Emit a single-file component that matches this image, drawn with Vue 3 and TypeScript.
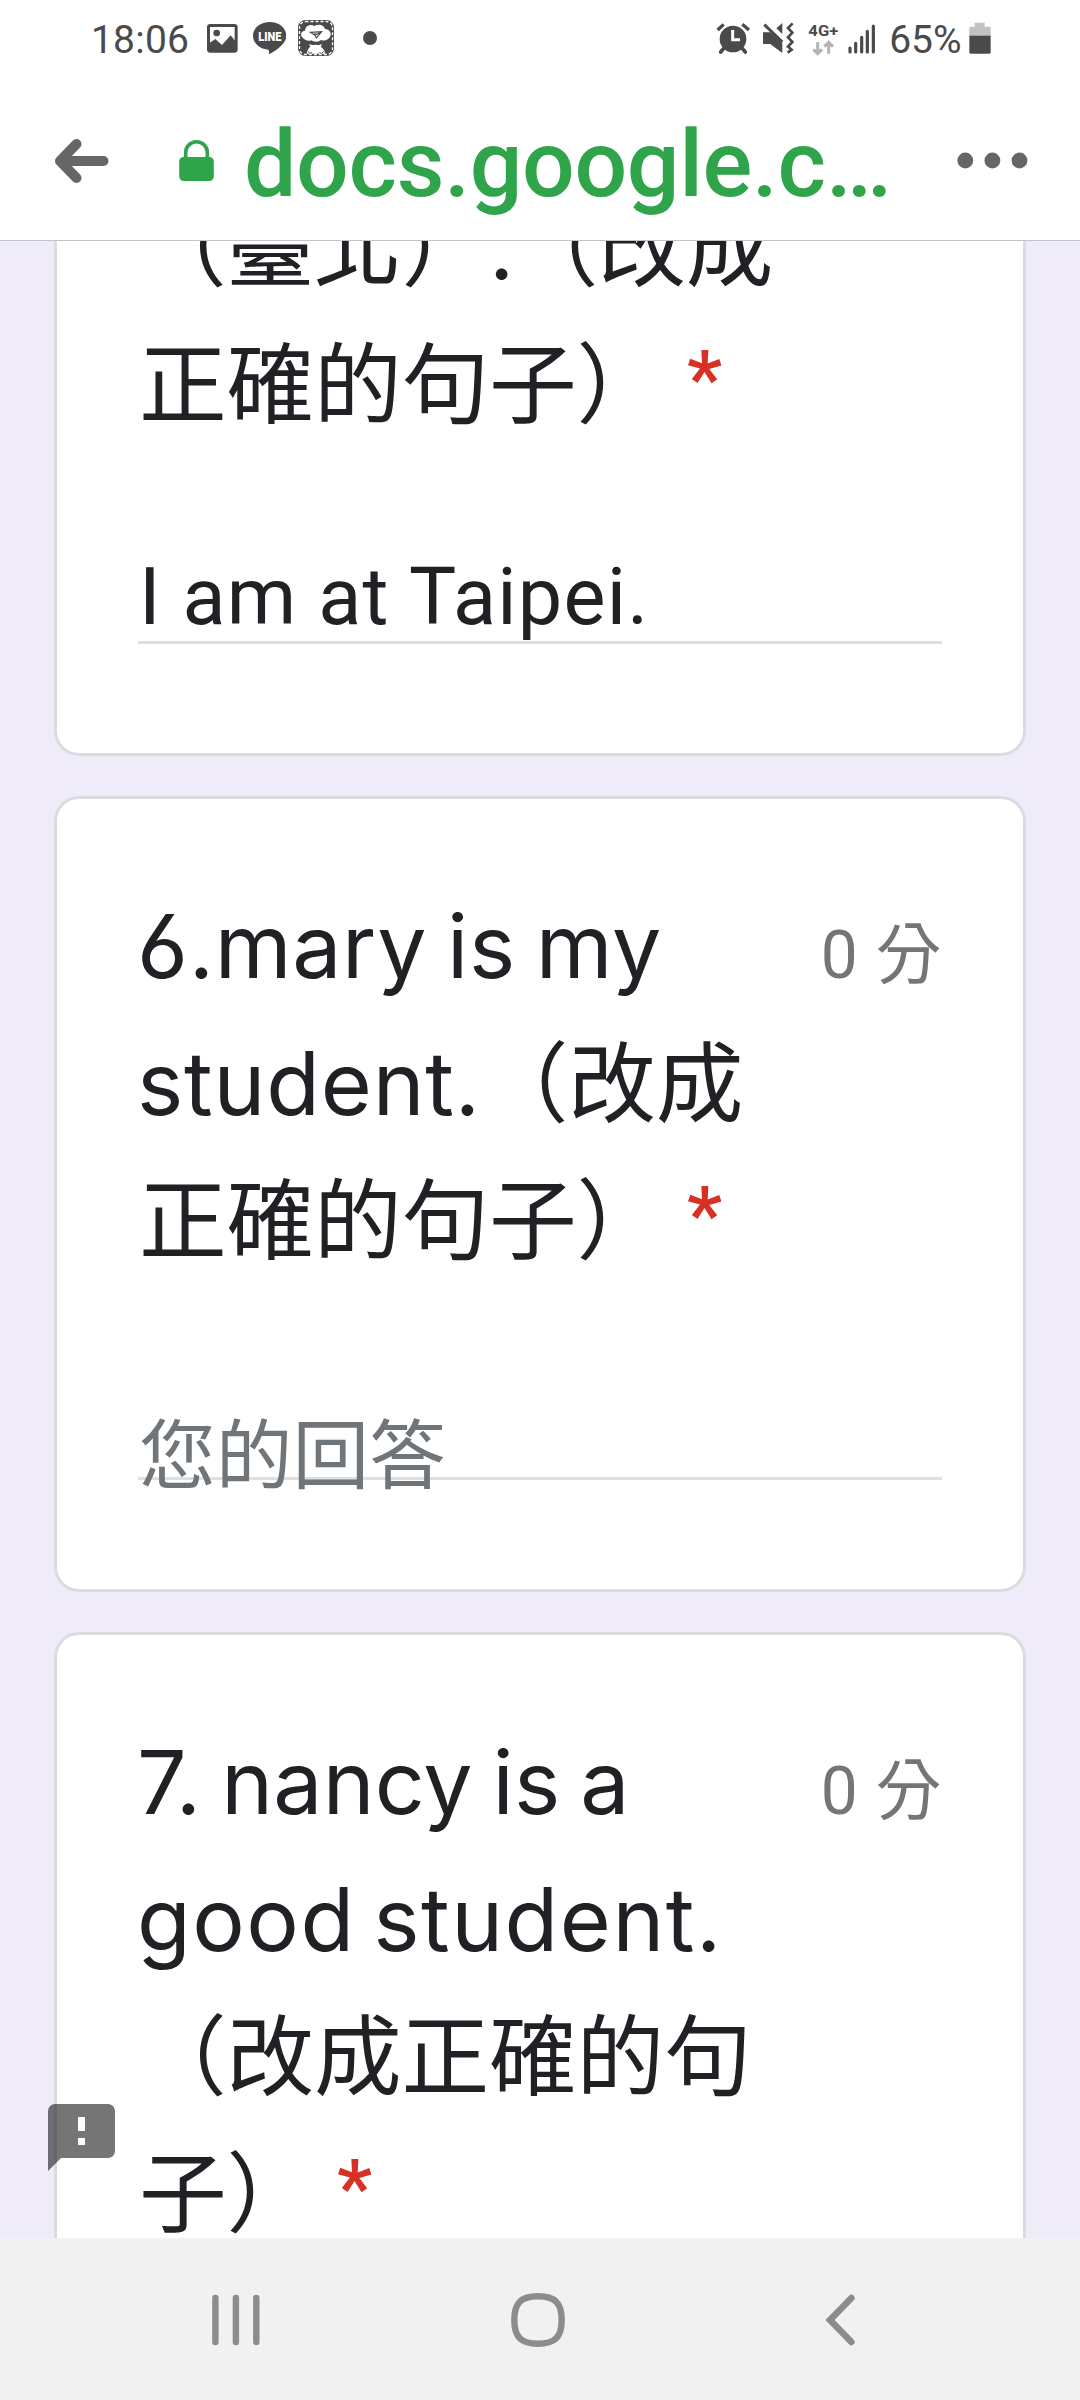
<script setup lang="ts">
interface Run {
  text: string
  kind: 'latin' | 'cjk'
  spacing?: number
  wordSpacing?: number
}
interface Question {
  id: number
  lines: Run[][]
  points?: string
  answer?: string
}

const placeholder = '您的回答'

const questions: Question[] = [
  {
    id: 5,
    lines: [
      [
        { text: '（臺北）', kind: 'cjk' },
        { text: '.', kind: 'latin', spacing: -3.5 },
        { text: '（改成', kind: 'cjk' },
      ],
      [{ text: '正確的句子）', kind: 'cjk' }],
    ],
    answer: 'I am at Taipei.',
  },
  {
    id: 6,
    lines: [
      [{ text: '6.mary is my', kind: 'latin', spacing: 0.7, wordSpacing: -5.5 }],
      [
        { text: 'student.', kind: 'latin', spacing: 0.8 },
        { text: '（改成', kind: 'cjk' },
      ],
      [{ text: '正確的句子）', kind: 'cjk' }],
    ],
    points: '0 分',
  },
  {
    id: 7,
    lines: [
      [{ text: '7. nancy is a', kind: 'latin', spacing: 0.2, wordSpacing: -5 }],
      [{ text: 'good student.', kind: 'latin', spacing: 1.5, wordSpacing: -8.5 }],
      [{ text: '（改成正確的句', kind: 'cjk' }],
      [{ text: '子）', kind: 'cjk' }],
    ],
    points: '0 分',
  },
]

const runStyle = (run: Run) => ({
  letterSpacing: run.spacing === undefined ? undefined : `${run.spacing}px`,
  wordSpacing: run.wordSpacing === undefined ? undefined : `${run.wordSpacing}px`,
})
</script>

<template>
  <div class="screen">
    <div class="status">
      <span class="clock">18:06</span>
      <svg class="i-photo" viewBox="441 0 92 240" width="30.67" height="80">
        <rect x="445.500" y="76.500" width="83" height="77" rx="5" fill="none" stroke="#4a4a4a" stroke-width="9" />
        <circle cx="470" cy="99" r="10" fill="#4a4a4a" />
        <path d="M447 130L466 117L486 135L512 106L528 126V154H447z" fill="#4a4a4a" />
      </svg>
      <svg class="i-line" viewBox="578 0 101 240" width="33.67" height="80">
        <path d="M628 66c28 0 50 18 50 41 0 14-9 25-22 36-10 8-20 15-30 20 0-5 1-11-2-14-26-2-46-20-46-42 0-23 22-41 50-41z" fill="#4a4a4a" />
        <text x="628.500" y="122" text-anchor="middle" textLength="70" lengthAdjust="spacingAndGlyphs" font-size="36" class="brand">LINE</text>
      </svg>
      <svg class="i-app" viewBox="712 0 114 240" width="38" height="80">
        <rect x="717" y="62" width="104" height="104" rx="20" fill="#4a4a4a" />
        <path d="M728 112c-8-8-2-20 8-20 0-14 16-22 28-14 14-8 30-2 32 9 14 0 22 14 14 25-4 8-16 12-26 8-8 7-20 7-28 1-10 4-22 0-28-9z" fill="#fff" />
        <path d="M740 166c2-14 6-22 12-26l-4-8c8 4 14 4 20 2 6 2 12 2 18-2l-2 9c8 5 12 13 14 25z" fill="#fff" />
        <path d="M752 97l34-2-16 19-4-8zM766 106l20-11M757 102l14 0" fill="none" stroke="#4a4a4a" stroke-width="3.500" />
        <path d="M745 154q5 10 12 4M779 158q8 6 13-4" fill="none" stroke="#4a4a4a" stroke-width="3" />
        <rect x="718.500" y="63.500" width="101" height="101" rx="19" fill="none" stroke="#4a4a4a" stroke-width="7" />
        <rect x="719.500" y="64.500" width="99" height="99" rx="18" fill="none" stroke="#fff" stroke-width="4" stroke-dasharray="9 6" />
      </svg>
      <svg class="i-dot" viewBox="908 0 42 240" width="14" height="80"><circle cx="929" cy="114" r="21" fill="#4a4a4a" /></svg>

      <div class="status-right">
        <svg class="i-alarm" viewBox="78 0 104 240" width="34.67" height="80">
          <circle cx="129" cy="117" r="40" fill="#4a4a4a" />
          <path d="M83 90L101 73M177 90L157 73" stroke="#4a4a4a" stroke-width="10" fill="none" />
          <path d="M101 145L92 156M157 145L166 156" stroke="#4a4a4a" stroke-width="11" stroke-linecap="round" fill="none" />
          <path d="M128 90V119H150" stroke="#fff" stroke-width="9" fill="none" />
        </svg>
        <svg class="i-mute" viewBox="215 0 98 240" width="32.67" height="80">
          <path d="M218 97H240L276 130V159L240 132H218z" fill="#4a4a4a" />
          <path d="M222 74L276 126" stroke="#4a4a4a" stroke-width="9" fill="none" />
          <path d="M258 85L276 69V102z" fill="#4a4a4a" />
          <path d="M307 70L293 84L306 98L293 112L306 126L293 140L304 149L292 158" stroke="#4a4a4a" stroke-width="8" fill="none" />
        </svg>
        <svg class="i-net" viewBox="353 0 94 240" width="31.33" height="80">
          <text x="354" y="109" textLength="90" lengthAdjust="spacingAndGlyphs" font-size="43" class="net">4G+</text>
          <path d="M382 126V160M369 148L382 161L395 148M415 161V128M402 140L415 127L428 140" stroke="#b3b3b3" stroke-width="9" fill="none" />
        </svg>
        <svg class="i-signal" viewBox="475 0 84 240" width="28" height="80">
          <path d="M481 144V156M498 130V156M516 112V156M533 94V156M551 78V156" stroke="#4a4a4a" stroke-width="9.500" stroke-linecap="round" />
        </svg>
        <span class="percent">65%</span>
        <svg class="i-battery" viewBox="836 0 66 240" width="22" height="80">
          <path d="M837 108V84q0-4 4-4H853V68H883V80H897q4 0 4 4V108z" fill="#c2c2c2" />
          <path d="M837 107H901V157q0 4-4 4H841q-4 0-4-4z" fill="#4a4a4a" />
        </svg>
      </div>
    </div>

    <div class="bar">
      <svg class="back" viewBox="54 130 56 62" width="56" height="62">
        <path d="M76.500 144L60 161L76.500 178M60 161H103.500" fill="none" stroke="#666" stroke-width="10" stroke-linecap="round" stroke-linejoin="round" />
        <path d="M58 161L70 150V172z" fill="#666" />
      </svg>
      <svg class="lock" viewBox="179 130 35 62" width="35" height="62">
        <rect x="179.200" y="157" width="34.600" height="24" rx="4.500" fill="#2fa44a" />
        <path d="M185.700 158V152.500a10.800 10.800 0 0 1 21.600 0V158" fill="none" stroke="#2fa44a" stroke-width="3.600" />
      </svg>
      <span class="url">docs.google.c…</span>
      <svg class="more" viewBox="957 130 71 62" width="71" height="62">
        <circle cx="965.300" cy="160.500" r="7.900" fill="#666" />
        <circle cx="992.400" cy="160.500" r="7.900" fill="#666" />
        <circle cx="1019.500" cy="160.500" r="7.900" fill="#666" />
      </svg>
    </div>

    <main class="page">
      <section v-for="q in questions" :key="q.id" class="card">
        <div class="head">
          <h2 class="title">
            <span v-for="(line, i) in q.lines" :key="i" class="line">
              <span v-for="(run, j) in line" :key="j" :class="run.kind" :style="runStyle(run)">{{ run.text }}</span>
              <span v-if="i === q.lines.length - 1" class="star">*</span>
            </span>
          </h2>
          <span v-if="q.points" class="points">{{ q.points }}</span>
        </div>
        <div class="field" :class="{ filled: q.answer }">{{ q.answer ?? placeholder }}</div>
      </section>
      <svg class="feedback" viewBox="0 0 67 67" width="67" height="67">
        <path fill-rule="evenodd" d="M7 0H60a7 7 0 0 1 7 7V47a7 7 0 0 1-7 7H13L0 67V7a7 7 0 0 1 7-7zM30 13V27H37V13zM30 34V41H37V34z" fill="#000" fill-opacity=".54" />
      </svg>
    </main>

    <nav class="nav">
      <svg viewBox="205 2290 62 60" width="62" height="60">
        <path d="M215.400 2298V2342M235.900 2298V2342M256.300 2298V2342" stroke="#8c8c8c" stroke-width="6.400" stroke-linecap="round" />
      </svg>
      <svg viewBox="508 2290 60 60" width="60" height="60">
        <path d="M538 2296.300c17 0 23.700 6.700 23.700 23.700s-6.700 23.700-23.700 23.700-23.700-6.700-23.700-23.700 6.700-23.700 23.700-23.700z" fill="none" stroke="#8c8c8c" stroke-width="6.400" />
      </svg>
      <svg viewBox="820 2290 40 60" width="40" height="60">
        <path d="M851.400 2298L830 2320L851.400 2342" fill="none" stroke="#8c8c8c" stroke-width="6.600" stroke-linecap="round" />
      </svg>
    </nav>
  </div>
</template>

<style>
html,
body {
  margin: 0;
  overflow: hidden;
}
</style>

<style scoped>
.screen {
  width: 1080px;
  height: 2400px;
  display: flex;
  flex-direction: column;
  overflow: hidden;
  background: #fff;
  font-family: Roboto, 'Noto Sans CJK TC', sans-serif;
}
svg {
  display: block;
  flex: none;
}
.status {
  height: 80px;
  flex: none;
  display: flex;
  padding-left: 91px;
  color: #4a4a4a;
}
.clock,
.percent {
  font-size: 39px;
  line-height: 80px;
  white-space: nowrap;
}
.clock {
  width: 116px;
  letter-spacing: 0.200px;
}
.i-line {
  margin-left: 15px;
}
.i-app {
  margin-left: 11px;
}
.i-dot {
  margin-left: 27.300px;
}
.brand {
  font-family: Roboto, sans-serif;
  font-weight: 900;
  fill: #fff;
}
.net {
  font-family: Roboto, sans-serif;
  font-weight: 700;
  fill: #4a4a4a;
}
.status-right {
  display: flex;
  margin-left: auto;
  padding-right: 89.300px;
}
.i-mute {
  margin-left: 11px;
}
.i-net {
  margin-left: 13.300px;
}
.i-signal {
  margin-left: 9.300px;
}
.percent {
  width: 79px;
  margin-left: 13.300px;
  text-indent: -0.500px;
}
.bar {
  height: 160px;
  flex: none;
  display: flex;
  align-items: center;
  padding-left: 54px;
  border-bottom: 1px solid #c3c3c7;
}
.lock {
  margin-left: 69px;
}
.url {
  width: 713px;
  margin: 9px 0 0 30px;
  font-size: 93px;
  font-weight: 500;
  line-height: 100px;
  letter-spacing: -0.350px;
  color: #2fa44a;
  white-space: nowrap;
}
.back,
.lock,
.more {
  margin-top: 2px;
}
.page {
  position: relative;
  height: 1997px;
  flex: none;
  overflow: hidden;
  display: flex;
  flex-direction: column;
  gap: 40px;
  padding: 0 54px;
  background: #f0ebf8;
}
.card {
  box-sizing: border-box;
  width: 972px;
  height: 796px;
  flex: none;
  padding: 79px 81px 0;
  border: 3px solid #dadce0;
  border-radius: 25px;
  background: #fff;
}
.card:first-child {
  height: 659px;
  margin-top: -144px;
}
.card:last-of-type {
  height: 932px;
}
.head {
  display: flex;
  justify-content: space-between;
  padding-left: 1px;
}
.title {
  margin: 0;
  font-family: Inter, 'Noto Sans CJK TC', sans-serif;
  font-size: 87.700px;
  font-weight: 400;
  line-height: 137px;
  color: #202124;
}
.line {
  display: flex;
  white-space: nowrap;
}
.latin {
  font-feature-settings: 'ss01', 'cv03';
}
.latin:first-child {
  margin-left: -2px;
}
.cjk {
  letter-spacing: -0.200px;
  text-spacing-trim: space-all;
}
.star {
  margin: -5px 0 0 23px;
  font-family: Roboto, sans-serif;
  font-size: 78px;
  font-weight: 600;
  color: #d93025;
}
.points {
  font-size: 65.800px;
  line-height: 156px;
  letter-spacing: 0.700px;
  color: #757575;
  white-space: nowrap;
}
.field {
  box-sizing: border-box;
  height: 191px;
  padding: 123px 0 0 1px;
  border-bottom: 3px solid #dfdfdf;
  font-size: 76.700px;
  line-height: 90px;
  color: #70757a;
  white-space: nowrap;
}
.filled {
  padding-top: 99px;
  font-size: 79.200px;
  letter-spacing: 1.200px;
  color: #202124;
}
.feedback {
  position: absolute;
  left: 48px;
  top: 1863px;
}
.nav {
  height: 162px;
  flex: none;
  display: flex;
  align-items: center;
  padding-left: 205px;
  background: #f1f1f1;
}
.nav svg {
  margin-top: 2px;
}
.nav svg + svg {
  margin-left: 241px;
}
.nav svg:last-child {
  margin-left: 252px;
}
</style>
